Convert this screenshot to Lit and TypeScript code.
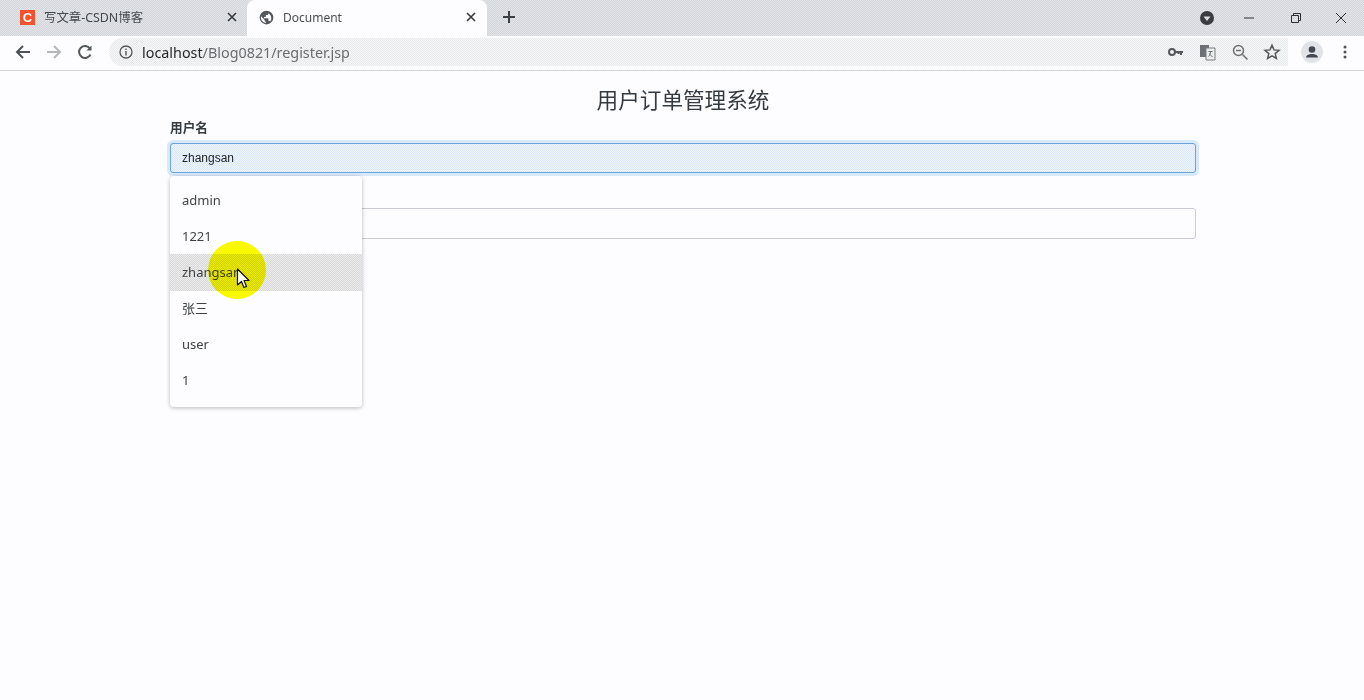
import { LitElement, html, css } from "lit";
import { customElement } from "lit/decorators.js";

@customElement("app-root")
export class AppRoot extends LitElement {
  static styles = css`
    :host { display: block; width: 1364px; height: 700px; overflow: hidden; position: relative; background: #fdfdff; font-family: "Noto Sans", "Noto Sans CJK SC", sans-serif; color: #3c4043; }
    .tabstrip { height: 36px; display: flex; align-items: center; background-color: #dbdee3; background-image: conic-gradient(#d3d6db 25%, #e2e4e8 0 50%, #d3d6db 0 75%, #e2e4e8 0); background-size: 2px 2px; }
    .tab { height: 36px; display: flex; align-items: center; box-sizing: border-box; font-size: 12px; flex: none; }
    .tab.inactive { width: 247px; padding: 0 10px 2px 20px; color: #45484c; font-size: 12.4px; }
    .tab.active { width: 240px; padding: 0 11px 2px 8px; background: #fdfdff; border-radius: 8px 8px 0 0; color: #4a4d51; }
    .favicon { width: 15px; height: 15px; background: #f0532d; color: #fff; font: bold 13px/15px "Liberation Sans", sans-serif; text-align: center; flex: none; margin-right: 9px; }
    .globe { margin: 0 9px 0 4px; flex: none; }
    .tab-title { flex: 1; white-space: nowrap; }
    .tab-x { flex: none; display: block; }
    .newtab { margin: 0 0 2px 15px; flex: none; display: block; }
    .spacer { flex: 1; }
    .winctl { display: flex; align-items: center; height: 36px; padding-right: 0; }
    .avatar-badge { margin-right: 11px; display: block; }
    .win { display: block; width: 46px; height: 28px; }
    .toolbar { height: 35px; padding-bottom: 2px; display: flex; align-items: center; background: #fdfdff; box-sizing: border-box; border-bottom: 1px solid #d4d5d8; }
    .navbtn { display: block; flex: none; margin-left: 14px; width: 18px; height: 18px; }
    .navbtn + .navbtn { margin-left: 13px; }
    .omnibox { flex: none; margin-left: 15px; width: 1179px; height: 28px; box-sizing: border-box; display: flex; align-items: center; background-color: #eff0f2; background-image: conic-gradient(#e8e9eb 25%, #f6f7f8 0 50%, #e8e9eb 0 75%, #f6f7f8 0); background-size: 2px 2px; border-radius: 14px 0 0 14px; padding: 0 6px 0 10px; }
    .info { flex: none; margin-right: 9px; display: block; }
    .url { font-size: 14.35px; color: #6a6d71; flex: 1; white-space: nowrap; }
    .url b { font-weight: 400; color: #26282b; }
    .omni-icon { display: block; flex: none; margin-left: 12px; width: 20px; height: 20px; }
    .profile { flex: none; margin-left: 13px; width: 22px; height: 22px; display: block; }
    .dots { flex: none; margin-left: 20px; display: block; }
    .page { width: 1026px; margin-left: 170px; padding-top: 13px; }
    h1 { margin: 0; text-align: center; font-size: 21.6px; line-height: 32px; font-weight: 400; color: #343a40; }
    .field { margin-bottom: 35px; }
    label { display: block; font-size: 12.7px; font-weight: 700; line-height: 18px; color: #343a40; margin: 2px 0 7px; height: 18px; }
    .input { height: 30px; box-sizing: border-box; border: 1px solid #c9cbd6; border-radius: 3px; background: #fdfdff; font-family: "Liberation Sans", sans-serif; font-size: 12px; line-height: 28px; padding: 0 11px; color: #212529; }
    .input.focus { border-color: #6ea4d6; background-color: #e4eefb; background-image: conic-gradient(#dae8f9 25%, #eef4fd 0 50%, #dae8f9 0 75%, #eef4fd 0); background-size: 2px 2px; box-shadow: 0 0 0 3px rgba(190, 222, 250, 0.6); }
    .input.second { height: 31px; }
    .menu { position: absolute; left: 170px; top: 176px; width: 192px; height: 231px; box-sizing: border-box; padding: 6px 0; background: #fdfdff; border-radius: 4px; box-shadow: 0 1px 4px rgba(0, 0, 0, 0.28); font-size: 13px; color: #3f4245; }
    .item { height: 36px; line-height: 36px; padding: 0 12px; }
    .item.hover { height: 37px; background-color: #e3e3e3; background-image: conic-gradient(#d9d9d9 25%, #ebebeb 0 50%, #d9d9d9 0 75%, #ebebeb 0); background-size: 2px 2px; }
    .item.after { margin-top: -1px; }
    .spot { position: absolute; left: 208px; top: 241px; width: 58px; height: 58px; border-radius: 50%; background: #fbfb00; mix-blend-mode: multiply; }
    .cursor { position: absolute; left: 236px; top: 268px; display: block; }
  `;

  render() {
    const items = ["admin", "1221", "zhangsan", "张三", "user", "1"];
    return html`
      <div class="tabstrip">
        <div class="tab inactive">
          <div class="favicon">C</div>
          <div class="tab-title">写文章-CSDN博客</div>
          <svg class="tab-x" width="10" height="10" viewBox="0 0 10 10"><path d="M1 1l8 8M9 1l-8 8" stroke="#35383c" stroke-width="1.6"/></svg>
        </div>
        <div class="tab active">
          <svg class="globe" width="15" height="15" viewBox="0 0 24 24"><path fill="#54575b" d="M12 1a11 11 0 1 0 0 22 11 11 0 0 0 0-22zm-1 19.900A9 9 0 0 1 3.200 10L9 15.800v1a2 2 0 0 0 2 2zm6.900-2.500A2 2 0 0 0 16 17h-1v-3a1 1 0 0 0-1-1H8v-2h2a1 1 0 0 0 1-1V8h2a2 2 0 0 0 2-2v-.9a9 9 0 0 1 2.900 13.300z"/></svg>
          <div class="tab-title">Document</div>
          <svg class="tab-x" width="10" height="10" viewBox="0 0 10 10"><path d="M1 1l8 8M9 1l-8 8" stroke="#35383c" stroke-width="1.6"/></svg>
        </div>
        <svg class="newtab" width="14" height="14" viewBox="0 0 14 14"><path d="M7 1v12M1 7h12" stroke="#3c4043" stroke-width="2"/></svg>
        <div class="spacer"></div>
        <div class="winctl">
          <svg class="avatar-badge" width="16" height="16" viewBox="0 0 16 16"><circle cx="8" cy="8" r="7" fill="#3a3c40"/><path d="M4.500 6.500h7L8 11z" fill="#dbdee3"/></svg>
          <svg class="win" viewBox="0 0 46 28"><path d="M18 14h10" stroke="#2b2d30" stroke-width="1"/></svg>
          <svg class="win" viewBox="0 0 46 28"><path d="M19.500 11.500h7v7h-7zM21.500 11.500v-2h7v7h-2" fill="none" stroke="#2b2d30" stroke-width="1"/></svg>
          <svg class="win" viewBox="0 0 46 28"><path d="M18 9l10 10M28 9L18 19" stroke="#2b2d30" stroke-width="1"/></svg>
        </div>
      </div>
      <div class="toolbar">
        <svg class="navbtn" viewBox="0 0 18 18"><path d="M16 9H3.500M9 3L3 9l6 6" fill="none" stroke="#4f5256" stroke-width="2"/></svg>
        <svg class="navbtn" viewBox="0 0 18 18"><path d="M2 9h12.500M9 3l6 6-6 6" fill="none" stroke="#b5b7ba" stroke-width="2"/></svg>
        <svg class="navbtn" viewBox="0 0 18 18"><path d="M14.500 11.500A6 6 0 1 1 14 5.500" fill="none" stroke="#54575b" stroke-width="2"/><path d="M15.500 2.500v5h-5z" fill="#54575b"/></svg>
        <div class="omnibox">
          <svg class="info" width="14" height="14" viewBox="0 0 14 14"><circle cx="7" cy="7" r="6" fill="none" stroke="#54575b" stroke-width="1.300"/><path d="M7 6v4.500M7 3.500v1.500" stroke="#54575b" stroke-width="1.400"/></svg>
          <div class="url"><b>localhost</b>/Blog0821/register.jsp</div>
          <svg class="omni-icon" viewBox="0 0 20 20"><circle cx="6" cy="10" r="3" fill="none" stroke="#54575b" stroke-width="2"/><path d="M9 10h8M15 10v3M12.500 10v2" stroke="#54575b" stroke-width="2"/></svg>
          <svg class="omni-icon" viewBox="0 0 20 20"><path d="M2 3h9v12H2z" fill="#6d7074"/><path d="M8 6h9v12H8z" fill="#eceded" stroke="#7b7e82"/><path d="M10.500 9.500h4M12.500 9.500c0 3-1 4-2 5M11.500 11.500c.5 1.500 2 3 3 3" fill="none" stroke="#6d7074"/></svg>
          <svg class="omni-icon" viewBox="0 0 20 20"><circle cx="8.500" cy="8.500" r="5" fill="none" stroke="#6d7074" stroke-width="1.500"/><path d="M12.500 12.500l5 5M6 8.500h5" stroke="#6d7074" stroke-width="1.500"/></svg>
          <svg class="omni-icon" viewBox="0 0 20 20"><path d="M10 3.200l2 4.700 5 .4-3.800 3.300 1.200 4.900L10 13.900l-4.400 2.600 1.200-4.900L3 8.300l5-.4z" fill="none" stroke="#54575b" stroke-width="1.500"/></svg>
        </div>
        <svg class="profile" viewBox="0 0 22 22"><circle cx="11" cy="11" r="11" fill="#e1e3e8"/><circle cx="11" cy="8.500" r="3.300" fill="#44474f"/><path d="M5 16.500c0-2.500 3.500-3.500 6-3.500s6 1 6 3.500z" fill="#44474f"/></svg>
        <svg class="dots" width="4" height="14" viewBox="0 0 4 14"><circle cx="2" cy="2" r="1.500" fill="#4f5256"/><circle cx="2" cy="7" r="1.500" fill="#4f5256"/><circle cx="2" cy="12" r="1.500" fill="#4f5256"/></svg>
      </div>
      <main class="page">
        <h1>用户订单管理系统</h1>
        <div class="field">
          <label>用户名</label>
          <div class="input focus">zhangsan</div>
        </div>
        <div class="input second"></div>
      </main>
      <div class="menu">
        ${items.map((t, i) => html`<div class="item ${i === 2 ? "hover" : ""} ${i === 3 ? "after" : ""}">${t}</div>`)}
      </div>
      <div class="spot"></div>
      <svg class="cursor" width="14" height="22" viewBox="0 0 14 22"><path d="M1.500 1v16l4-3.500 2.500 6 2.500-1-2.500-6h5z" fill="#fff" stroke="#111" stroke-width="1.200" stroke-linejoin="round"/></svg>
    `;
  }
}
